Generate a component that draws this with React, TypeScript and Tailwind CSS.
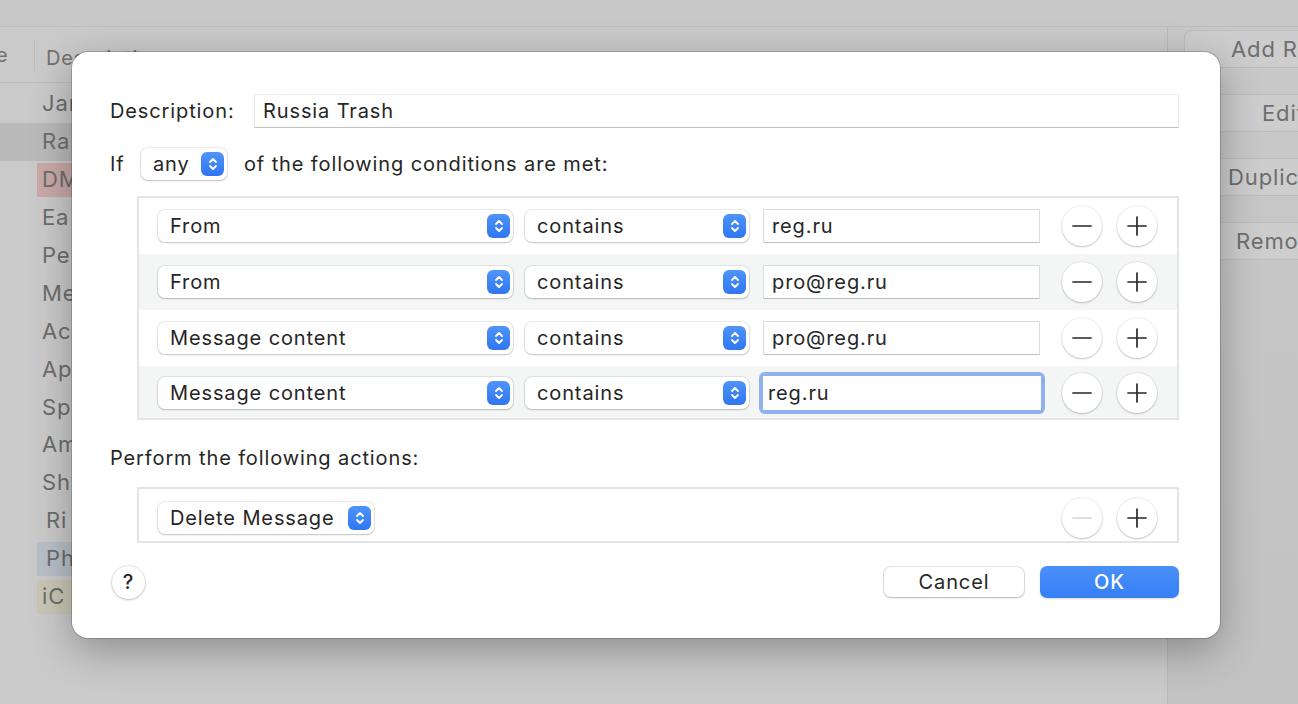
import React from 'react';

const FONT = { fontFamily: 'Inter, "Noto Sans", "Liberation Sans", sans-serif', letterSpacing: '0.055em' };

type Cond = { field: string; op: string; value: string; focused?: boolean };

const conditions: Cond[] = [
  { field: 'From', op: 'contains', value: 'reg.ru' },
  { field: 'From', op: 'contains', value: 'pro@reg.ru' },
  { field: 'Message content', op: 'contains', value: 'pro@reg.ru' },
  { field: 'Message content', op: 'contains', value: 'reg.ru', focused: true },
];

const rules = [
  { name: 'Jan', bg: '', indent: false },
  { name: 'Ra', bg: 'bg-[#b9b9b9]', indent: false, full: true },
  { name: 'DM', bg: 'bg-[#c9a9a7]', indent: false },
  { name: 'Ea', bg: '', indent: false },
  { name: 'Pe', bg: '', indent: false },
  { name: 'Me', bg: '', indent: false },
  { name: 'Ac', bg: '', indent: false },
  { name: 'Ap', bg: '', indent: false },
  { name: 'Sp', bg: '', indent: false },
  { name: 'Am', bg: '', indent: false },
  { name: 'Sh', bg: '', indent: false },
  { name: 'Ri', bg: '', indent: true },
  { name: 'Ph', bg: 'bg-[#b8bfc8]', indent: true },
  { name: 'iC', bg: 'bg-[#c9c6b4]', indent: false },
];

function Stepper() {
  return (
    <span className="flex h-[24px] w-[23px] shrink-0 items-center justify-center rounded-[6px] bg-gradient-to-b from-[#4f94f9] to-[#2f76f1]">
      <svg width="12" height="16" viewBox="0 0 12 16" fill="none">
        <path d="M3 6 L6 3 L9 6" stroke="white" strokeWidth="1.8" strokeLinecap="round" strokeLinejoin="round" />
        <path d="M3 10 L6 13 L9 10" stroke="white" strokeWidth="1.8" strokeLinecap="round" strokeLinejoin="round" />
      </svg>
    </span>
  );
}

function Popup({ label, className = '' }: { label: string; className?: string }) {
  return (
    <div
      className={`flex h-[32px] items-center justify-between rounded-[7px] bg-white pl-[12px] pr-[3px] text-[20px] text-[#262626] shadow-[0_0_0_1px_rgba(0,0,0,0.08),0_1px_2px_rgba(0,0,0,0.18)] ${className}`}
    >
      <span className="mr-[6px] whitespace-nowrap leading-none">{label}</span>
      <Stepper />
    </div>
  );
}

function TextField({ value, focused = false, className = '' }: { value: string; focused?: boolean; className?: string }) {
  if (focused) {
    return (
      <div className={`flex h-[42px] items-center rounded-[6px] bg-[#8fb0f1] p-[4px] ${className}`}>
        <div className="flex h-full w-full items-center bg-white pl-[5px] text-[20px] text-[#262626]">{value}</div>
      </div>
    );
  }
  return (
    <div
      className={`flex h-[34px] items-center border border-[#dcdcdc] border-b-[#bfbfbf] bg-white pl-[8px] text-[20px] text-[#262626] ${className}`}
    >
      {value}
    </div>
  );
}

function RoundButton({ kind, disabled = false }: { kind: 'minus' | 'plus'; disabled?: boolean }) {
  const color = disabled ? '#d4d4d4' : '#262626';
  return (
    <div className="flex h-[40px] w-[40px] items-center justify-center rounded-full bg-white shadow-[0_0_0_1px_rgba(0,0,0,0.06),0_1px_2px_rgba(0,0,0,0.2)]">
      <svg width="20" height="20" viewBox="0 0 20 20">
        <path d="M1 10 H19" stroke={color} strokeWidth="1.7" strokeLinecap="round" />
        {kind === 'plus' && <path d="M10 1 V19" stroke={color} strokeWidth="1.7" strokeLinecap="round" />}
      </svg>
    </div>
  );
}

function ConditionRow({ c, shaded, last }: { c: Cond; shaded: boolean; last: boolean }) {
  return (
    <div className={`flex items-center pl-[19px] pr-[20px] ${last ? 'h-[52px] pt-[2px]' : 'h-[56px]'} ${shaded ? 'bg-[#f4f5f5]' : 'bg-white'}`}>
      <Popup label={c.field} className="w-[355px]" />
      <Popup label={c.op} className="ml-[12px] w-[224px]" />
      {c.focused ? (
        <TextField value={c.value} focused className="ml-[10px] w-[286px]" />
      ) : (
        <TextField value={c.value} className="ml-[14px] w-[277px]" />
      )}
      <div className={`flex gap-[15px] ${c.focused ? 'ml-[17px]' : 'ml-[22px]'}`}>
        <RoundButton kind="minus" />
        <RoundButton kind="plus" />
      </div>
    </div>
  );
}

function RulesDialog() {
  return (
    <div className="absolute left-[72px] top-[52px] flex h-[586px] w-[1148px] flex-col rounded-[16px] bg-white pl-[38px] pr-[41px] pt-[43px] shadow-[0_0_0_1px_rgba(0,0,0,0.18),0_12px_40px_rgba(0,0,0,0.3)]">
      <div className="flex h-[32px] items-center">
        <span className="w-[144px] text-[20px] text-[#262626]">Description:</span>
        <TextField value="Russia Trash" className="h-[32px] flex-1 !border-t-[#ececec] !border-x-[#e6e6e6]" />
      </div>

      <div className="mt-[21px] flex h-[32px] items-center text-[20px] text-[#262626]">
        <span className="w-[31px]">If</span>
        <Popup label="any" className="w-[86px]" />
        <span className="ml-[17px]">of the following conditions are met:</span>
      </div>

      <div className="ml-[27px] mt-[16px] border-2 border-[#e4e4e4]">
        {conditions.map((c, i) => (
          <ConditionRow key={i} c={c} shaded={i % 2 === 1} last={i === conditions.length - 1} />
        ))}
      </div>

      <div className="mt-[24px] h-[28px] text-[20px] leading-[28px] text-[#262626]">Perform the following actions:</div>

      <div className="ml-[27px] mt-[15px] flex h-[56px] items-center border-2 border-[#e4e4e4] pl-[19px] pr-[20px] pt-[5px]">
        <Popup label="Delete Message" className="w-[216px]" />
        <div className="ml-auto flex gap-[15px]">
          <RoundButton kind="minus" disabled />
          <RoundButton kind="plus" />
        </div>
      </div>

      <div className="mt-[23px] flex h-[32px] items-center">
        <div className="ml-[2px] flex h-[33px] w-[33px] items-center justify-center rounded-full bg-white text-[20px] font-medium text-[#262626] shadow-[0_0_0_1px_rgba(0,0,0,0.07),0_1px_3px_rgba(0,0,0,0.2)]">
          ?
        </div>
        <button className="ml-auto flex h-[30px] w-[140px] items-center justify-center rounded-[7px] bg-white text-[20px] text-[#262626] shadow-[0_0_0_1px_rgba(0,0,0,0.1),0_1px_2px_rgba(0,0,0,0.2)]">
          Cancel
        </button>
        <button className="ml-[16px] flex h-[32px] w-[139px] items-center justify-center rounded-[7px] bg-gradient-to-b from-[#4a90f9] to-[#3580f5] text-[20px] font-medium text-white shadow-[0_1px_2px_rgba(0,0,0,0.15)]">
          OK
        </button>
      </div>
    </div>
  );
}

function BackgroundWindow() {
  return (
    <div className="flex h-[704px] w-[1298px] flex-col bg-gradient-to-b from-[#c9c9c9] to-[#c2c2c2]">
      <div className="h-[27px] border-b border-[#bdbdbd] bg-[#c8c8c8]" />
      <div className="flex flex-1">
        <div className="flex w-[1168px] shrink-0 flex-col border-r border-[#b9b9b9] bg-[#cacaca]">
          <div className="flex h-[56px] items-center border-b border-[#bdbdbd] text-[20px] text-[#727272]">
            <span className="-ml-[4px] w-[38px] overflow-hidden">e</span>
            <span className="h-[32px] border-l border-[#bcbcbc]" />
            <span className="ml-[11px] pt-[6px]">Description</span>
          </div>
          <div className="flex flex-col pt-[2px]">
            {rules.map((r) => (
              <div key={r.name} className={`flex h-[37.9px] items-center ${r.full ? r.bg : ''}`}>
                <span
                  className={`ml-[37px] flex h-[34px] items-center pr-[40px] text-[22px] text-[#6d6d6d] ${r.full ? '' : r.bg} ${r.indent ? 'pl-[9px]' : 'pl-[5px]'}`}
                >
                  {r.name}
                </span>
              </div>
            ))}
          </div>
        </div>
        <div className="flex min-w-0 flex-1 flex-col gap-[26px] pl-[16px] pt-[3px]">
          {['Add Rule', 'Edit', 'Duplicate', 'Remove'].map((b, i) => (
            <div
              key={b}
              className={`flex h-[38px] items-center overflow-hidden rounded-l-[8px] border border-r-0 border-[#bdbdbd] bg-[#cdcdcd] text-[22px] text-[#6e6e6e] ${
                i === 0 ? 'pl-[46px]' : i === 1 ? 'pl-[77px]' : i === 2 ? 'pl-[43px]' : 'pl-[51px]'
              }`}
            >
              <span className="whitespace-nowrap">{b}</span>
            </div>
          ))}
        </div>
      </div>
    </div>
  );
}

export default function App() {
  return (
    <div className="relative h-[704px] w-[1298px] overflow-hidden" style={FONT}>
      <BackgroundWindow />
      <RulesDialog />
    </div>
  );
}
